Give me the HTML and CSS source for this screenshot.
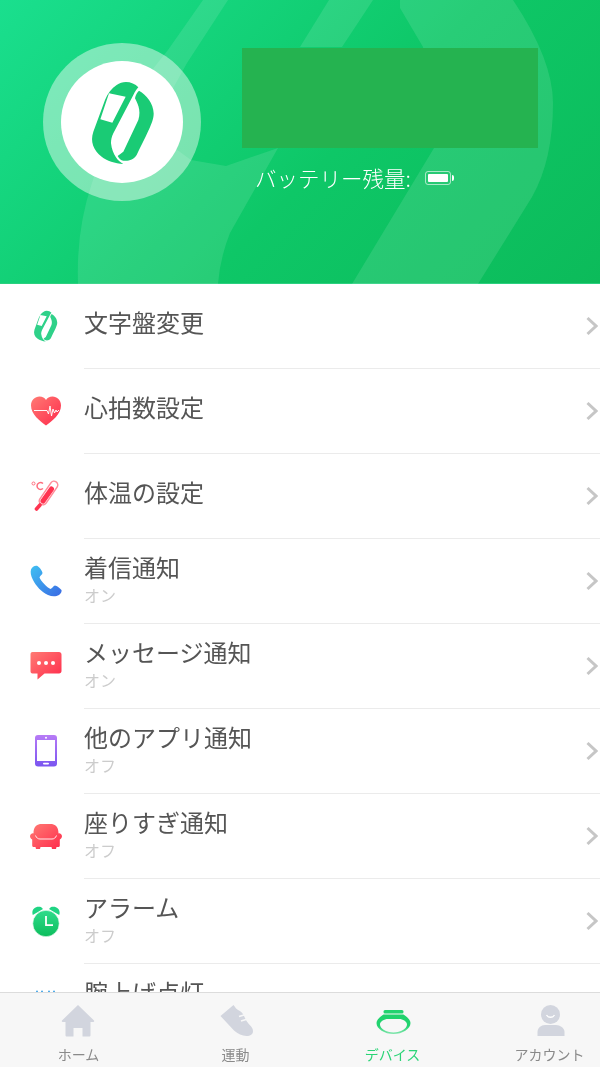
FILE: index.html
```html
<!DOCTYPE html>
<html lang="ja">
<head>
<meta charset="utf-8">
<title>デバイス</title>
<link rel="stylesheet" href="styles.css">
</head>
<body>
<svg class="defs" width="0" height="0" aria-hidden="true">
  <defs>
    <linearGradient id="g-red" x1="0" y1="0" x2="1" y2="1"><stop offset="0" stop-color="#ff7b74"/><stop offset="1" stop-color="#ff2a4b"/></linearGradient>
    <linearGradient id="g-blue" x1="0" y1="0" x2="1" y2="1"><stop offset="0" stop-color="#3fc0f2"/><stop offset="1" stop-color="#3a6ae4"/></linearGradient>
    <linearGradient id="g-purple" x1="0" y1="0" x2="0" y2="1"><stop offset="0" stop-color="#b77bf6"/><stop offset="1" stop-color="#7a55f0"/></linearGradient>
    <linearGradient id="g-green" x1="0" y1="0" x2="0" y2="1"><stop offset="0" stop-color="#2fdc8c"/><stop offset="1" stop-color="#0cbd5c"/></linearGradient>
    <linearGradient id="g-tab" x1="0" y1="0" x2="0" y2="1"><stop offset="0" stop-color="#1fd26c"/><stop offset=".6" stop-color="#22d36f"/><stop offset="1" stop-color="#86e6b0"/></linearGradient>
    <symbol id="band" viewBox="205 150 195 255">
      <path fill-rule="evenodd" d="M350 172C335 155 305 150 285 165C270 175 258 190 250 210L215 305C205 335 215 360 240 380C255 392 280 400 305 402C290 395 272 375 268 340C268 330 270 320 275 310L335 195C340 185 345 178 350 172ZM262 190L312 200L272 278L236 268Z"/>
      <path d="M352 182C375 195 395 220 396 250C396 270 390 285 345 375C335 390 320 394 305 392C298 391 292 386 288 378L305 365L350 270C360 240 345 215 340 205C342 195 346 187 352 182Z"/>
    </symbol>
  </defs>
</svg>
<div class="app">
  <header class="hero">
    <svg class="hero-bands" viewBox="0 0 600 284" aria-hidden="true">
      <path d="M203 0L228 0L187 63L150 130L191 160L226 166L278 148L230 233Q220 258 218 284L78 284Q76 230 92 183Q110 120 168 50Z"/>
      <path d="M329 0L373 0L342 47L300 47Z"/>
      <path d="M400 0L513 0Q553 60 553 103Q553 160 532 197L478 284L352 284L434 148L423 47L400 8Z"/>
    </svg>
    <div class="avatar-ring">
      <div class="avatar">
        <svg class="avatar-band"><use href="#band"/></svg>
      </div>
    </div>
    <div class="hero-info">
      <div class="name-block"></div>
      <div class="battery-row">
        <span>バッテリー残量:</span>
        <span class="battery"><span class="battery-fill"></span></span>
      </div>
    </div>
  </header>

  <main class="list">
    <div class="row">
      <div class="row-icon"><svg class="icon-band-small" width="25" height="32"><use href="#band"/></svg></div>
      <div class="row-body"><div class="row-text"><div class="title">文字盤変更</div></div>
        <svg class="chev" width="12" height="20" viewBox="0 0 12 20"><path d="M1.500 2L10 10L1.500 18"/></svg></div>
    </div>
    <div class="row">
      <div class="row-icon"><svg width="32" height="30" viewBox="0 0 32 30">
        <path fill="url(#g-red)" d="M16 29.500C10 25 1 18.500 1 9.500C1 4 5 .5 9.500 .5C12.500 .5 14.800 2 16 4C17.200 2 19.500 .5 22.500 .5C27 .5 31 4 31 9.500C31 18.500 22 25 16 29.500Z"/>
        <path fill="none" stroke="#fff" stroke-width="1" opacity=".95" d="M4 14.500H17L18.500 18L20 10L21.500 20L23 13L24.500 17L26 14L27 16L29 14"/>
      </svg></div>
      <div class="row-body"><div class="row-text"><div class="title">心拍数設定</div></div>
        <svg class="chev" width="12" height="20" viewBox="0 0 12 20"><path d="M1.500 2L10 10L1.500 18"/></svg></div>
    </div>
    <div class="row">
      <div class="row-icon"><svg width="30" height="32" viewBox="0 0 30 32">
        <path fill="none" stroke="#ff8d9a" stroke-width="9" stroke-linecap="round" d="M23 5L12 21"/>
        <path fill="none" stroke="#fff" stroke-width="6" stroke-linecap="round" d="M23 5L12 21"/>
        <path fill="none" stroke="#ff3350" stroke-width="5" stroke-linecap="round" d="M20.500 9L12 21"/>
        <path fill="none" stroke="#ff3350" stroke-width="3.600" stroke-linecap="round" d="M9 25L5.500 29"/>
        <circle cx="2.500" cy="3.500" r="1.500" fill="none" stroke="#ff6d7d" stroke-width="1"/>
        <path fill="none" stroke="#ff6d7d" stroke-width="1.500" d="M12 3.500C9.500 1.500 6 3 6 6C6 9 9.500 10.500 12 8.500"/>
      </svg></div>
      <div class="row-body"><div class="row-text"><div class="title">体温の設定</div></div>
        <svg class="chev" width="12" height="20" viewBox="0 0 12 20"><path d="M1.500 2L10 10L1.500 18"/></svg></div>
    </div>
    <div class="row">
      <div class="row-icon"><svg width="32" height="32" viewBox="0 0 32 32">
        <path fill="url(#g-blue)" d="M7 .8C5 .2 2 1.800 1 4.500C.2 7 .8 11 3 15C6 21 11.500 27 18 30C22 31.800 26 31.800 29 30C31 28.800 32 26 31.500 25C30.500 23.500 26.500 20.500 25 20.500C23.500 20.500 22 23.800 20.500 24C17.500 23 10.500 15.500 9.500 12.500C9.500 11 12.500 9.500 12.500 8C12.300 6 9 1.500 7 .8Z"/>
      </svg></div>
      <div class="row-body"><div class="row-text with-sub"><div class="title">着信通知</div><div class="sub">オン</div></div>
        <svg class="chev" width="12" height="20" viewBox="0 0 12 20"><path d="M1.500 2L10 10L1.500 18"/></svg></div>
    </div>
    <div class="row">
      <div class="row-icon"><svg width="32" height="28" viewBox="0 0 32 28">
        <path fill="url(#g-red)" d="M2.500 0H29C30.500 0 31.500 1 31.500 2.500V19C31.500 20.500 30.500 21.500 29 21.500H14.500L7.500 27.500V21.500H2.500C1 21.500 .5 20.500 .5 19V2.500C.5 1 1 0 2.500 0Z"/>
        <circle cx="9" cy="11" r="2" fill="#fff"/><circle cx="16" cy="11" r="2" fill="#fff"/><circle cx="23" cy="11" r="2" fill="#fff"/>
      </svg></div>
      <div class="row-body"><div class="row-text with-sub"><div class="title">メッセージ通知</div><div class="sub">オン</div></div>
        <svg class="chev" width="12" height="20" viewBox="0 0 12 20"><path d="M1.500 2L10 10L1.500 18"/></svg></div>
    </div>
    <div class="row">
      <div class="row-icon"><svg width="22" height="32" viewBox="0 0 22 32">
        <rect width="22" height="31.500" rx="3" fill="url(#g-purple)"/>
        <rect x="2" y="5" width="18" height="21" fill="#fff"/>
        <circle cx="11" cy="2.800" r="1" fill="#fff"/><rect x="8" y="27.700" width="6" height="1.800" rx=".9" fill="#fff"/>
      </svg></div>
      <div class="row-body"><div class="row-text with-sub"><div class="title">他のアプリ通知</div><div class="sub">オフ</div></div>
        <svg class="chev" width="12" height="20" viewBox="0 0 12 20"><path d="M1.500 2L10 10L1.500 18"/></svg></div>
    </div>
    <div class="row">
      <div class="row-icon"><svg width="32" height="25" viewBox="0 0 32 25">
        <path fill="url(#g-red)" d="M3.500 9.500C3.500 3 6 1 10 0H22C26 1 28.500 3 28.500 9.500C29.800 9 31.500 10 32 12C32 14 30.800 15 29.800 15.500V21.500C29.800 22.500 29 23 28 23H26.500L26 25H22L21.500 23H10.500L10 25H6L5.500 23H4C3 23 2.200 22.500 2.200 21.500V15.500C1.200 15 0 14 0 12C.5 10 2.200 9 3.500 9.500Z"/>
        <path fill="none" stroke="#fff" stroke-width=".9" d="M5.500 11.500C6.500 14 8 15 10 15H22C24 15 25.500 14 26.500 11.500"/>
      </svg></div>
      <div class="row-body"><div class="row-text with-sub"><div class="title">座りすぎ通知</div><div class="sub">オフ</div></div>
        <svg class="chev" width="12" height="20" viewBox="0 0 12 20"><path d="M1.500 2L10 10L1.500 18"/></svg></div>
    </div>
    <div class="row">
      <div class="row-icon"><svg width="28" height="31" viewBox="0 0 28 31">
        <path fill="#1fd483" d="M.8 9C-1 4 3 -.5 9 1L11 3ZM27.200 9C29 4 25 -.5 19 1L17 3Z"/>
        <circle cx="14" cy="17.500" r="13.200" fill="url(#g-green)" stroke="#fff" stroke-width=".6"/>
        <path fill="none" stroke="#fff" stroke-width="1.800" d="M14 10V19.200H21"/>
      </svg></div>
      <div class="row-body"><div class="row-text with-sub"><div class="title">アラーム</div><div class="sub">オフ</div></div>
        <svg class="chev" width="12" height="20" viewBox="0 0 12 20"><path d="M1.500 2L10 10L1.500 18"/></svg></div>
    </div>
    <div class="row">
      <div class="row-icon"><svg width="32" height="32" viewBox="0 0 32 32">
        <circle cx="7" cy="1.500" r="1" fill="#4aa8e8"/><circle cx="12" cy="1.500" r="1" fill="#4aa8e8"/><circle cx="19" cy="1.500" r="1" fill="#4aa8e8"/><circle cx="24" cy="1.500" r="1" fill="#4aa8e8"/>
        <rect x="6" y="8" width="20" height="20" rx="4" fill="url(#g-blue)"/>
      </svg></div>
      <div class="row-body"><div class="row-text with-sub"><div class="title">腕上げ点灯</div><div class="sub">オフ</div></div>
        <svg class="chev" width="12" height="20" viewBox="0 0 12 20"><path d="M1.500 2L10 10L1.500 18"/></svg></div>
    </div>
  </main>

  <nav class="tabs">
    <div class="tab">
      <svg class="tab-icon" width="34" height="34" viewBox="0 0 34 34"><path d="M16 1L32 16.500C32.500 17.500 32 18 31 18H28.500V31C28.500 32 28 32.500 27 32.500H20.500V24H11.500V32.500H5C4 32.500 3.500 32 3.500 31V18H1C0 18 -.5 17.500 0 16.500Z"/></svg>
      <span>ホーム</span>
    </div>
    <div class="tab">
      <svg class="tab-icon" width="36" height="34" viewBox="0 0 36 34">
        <path d="M2.500 12L15.500 1C17 3 18.500 5.500 21 6.500C24 8 25 10 27 14C29 20 35 22 35 27C35 30.500 32.500 32 28.500 32C24 32 20 29.500 16 26.500Z"/>
        <path fill="none" stroke="#f7f7f7" stroke-width="1.600" d="M21 12.500L26 11M23 17L28 15.500"/>
      </svg>
      <span>運動</span>
    </div>
    <div class="tab tab-active">
      <svg class="tab-icon" width="36" height="34" viewBox="0 0 36 34">
        <g transform="translate(1.500 6)">
          <rect x="7" y="0" width="20" height="3.500" rx="1.500" fill="#22d36f"/>
          <path fill="url(#g-tab)" fill-rule="evenodd" d="M7 4.500H27C31 7 34 10 34 13C34 19 26 24 17 24C8 24 0 19 0 13C0 10 3 7 7 4.500ZM10 9C6 10 3.500 12 3.500 14.500C3.500 18.500 9.500 22.500 17 22.500C24.500 22.500 30.500 18.500 30.500 14.500C30.500 12 28 10 24 9Z"/>
        </g>
      </svg>
      <span>デバイス</span>
    </div>
    <div class="tab">
      <svg class="tab-icon" width="34" height="34" viewBox="0 0 34 34">
        <circle cx="17.500" cy="10.500" r="9.500"/>
        <path fill="none" stroke="#fff" stroke-width="1.300" d="M13.500 11C15 14 20 14 21.500 11"/>
        <path d="M4.500 32V28C4.500 24 8 21 12 21H23C27 21 31.500 24 31.500 28V32Z"/>
      </svg>
      <span>アカウント</span>
    </div>
  </nav>
</div>
</body>
</html>
```
FILE: styles.css
```css
* { box-sizing: border-box; }
html, body { margin: 0; padding: 0; height: 100%; overflow: hidden; background: #fff; }
body { font-family: "Noto Sans CJK JP", "Noto Sans", sans-serif; }
.defs { position: absolute; }

.app { width: 600px; height: 1067px; display: flex; flex-direction: column; overflow: hidden; will-change: transform; }

.hero {
  position: relative;
  flex: none;
  height: 284px;
  padding: 43px 0 0 43px;
  display: flex;
  gap: 41px;
  background: linear-gradient(135deg, #1adf8e 0%, #0ec767 55%, #0cbb5a 100%);
  border-bottom: 1px solid #2bd07f;
}
.hero-bands { position: absolute; left: 0; top: 0; width: 600px; height: 284px; fill: #fff; fill-opacity: .11; }
.avatar-ring {
  position: relative;
  width: 158px;
  height: 158px;
  padding: 18px;
  border-radius: 50%;
  background: rgba(255, 255, 255, .44);
}
.avatar { width: 122px; height: 122px; border-radius: 50%; background: #fff; display: flex; align-items: center; justify-content: center; }
.avatar-band { width: 65px; height: 85px; fill: #1acb75; }
.hero-info { position: relative; padding-top: 5px; }
.name-block { width: 296px; height: 100px; background: #25b350; }
.battery-row { display: flex; align-items: center; gap: 14px; margin: 15px 0 0 13px; height: 30px; color: #fff; font-size: 21.5px; font-weight: 300; line-height: 30px; }
.battery { position: relative; width: 26px; height: 14px; padding: 2px; border: 1px solid rgba(255, 255, 255, .6); border-radius: 3px; }
.battery::after { content: ""; position: absolute; right: -4px; top: 3px; width: 2px; height: 6px; background: #fff; border-radius: 0 2px 2px 0; }
.battery-fill { display: block; height: 100%; background: #fff; border-radius: 1px; }

.list { flex: 1; min-height: 0; overflow: hidden; }
.row { display: flex; height: 85px; }
.row-icon { flex: none; width: 84px; padding-left: 7px; padding-bottom: 1px; display: flex; align-items: center; justify-content: center; }
.icon-band-small { fill: #2fd189; }
.row-body { flex: 1; min-width: 0; display: flex; align-items: center; justify-content: space-between; padding-right: 2px; border-bottom: 1px solid #ebebeb; }
.row-text { padding-bottom: 8px; }
.row-text.with-sub { padding-bottom: 5px; }
.title { font-size: 24px; line-height: 32px; color: #555; font-weight: 400; }
.sub { font-size: 16px; line-height: 22px; color: #ccc; font-weight: 400; margin-top: 1px; }
.chev { flex: none; fill: none; stroke: #c6c6c6; stroke-width: 3; }

.tabs { flex: none; height: 75px; display: grid; grid-template-columns: repeat(4, 157px); background: #f7f7f7; border-top: 1px solid #dcdcdc; }
.tab { display: flex; flex-direction: column; align-items: center; padding-top: 11px; font-size: 14px; line-height: 20px; color: #8a8a8a; font-weight: 400; white-space: nowrap; }
.tab-icon { display: block; fill: #d2d5de; margin-bottom: 6px; overflow: visible; }
.tab-active { color: #2ad476; }
```
